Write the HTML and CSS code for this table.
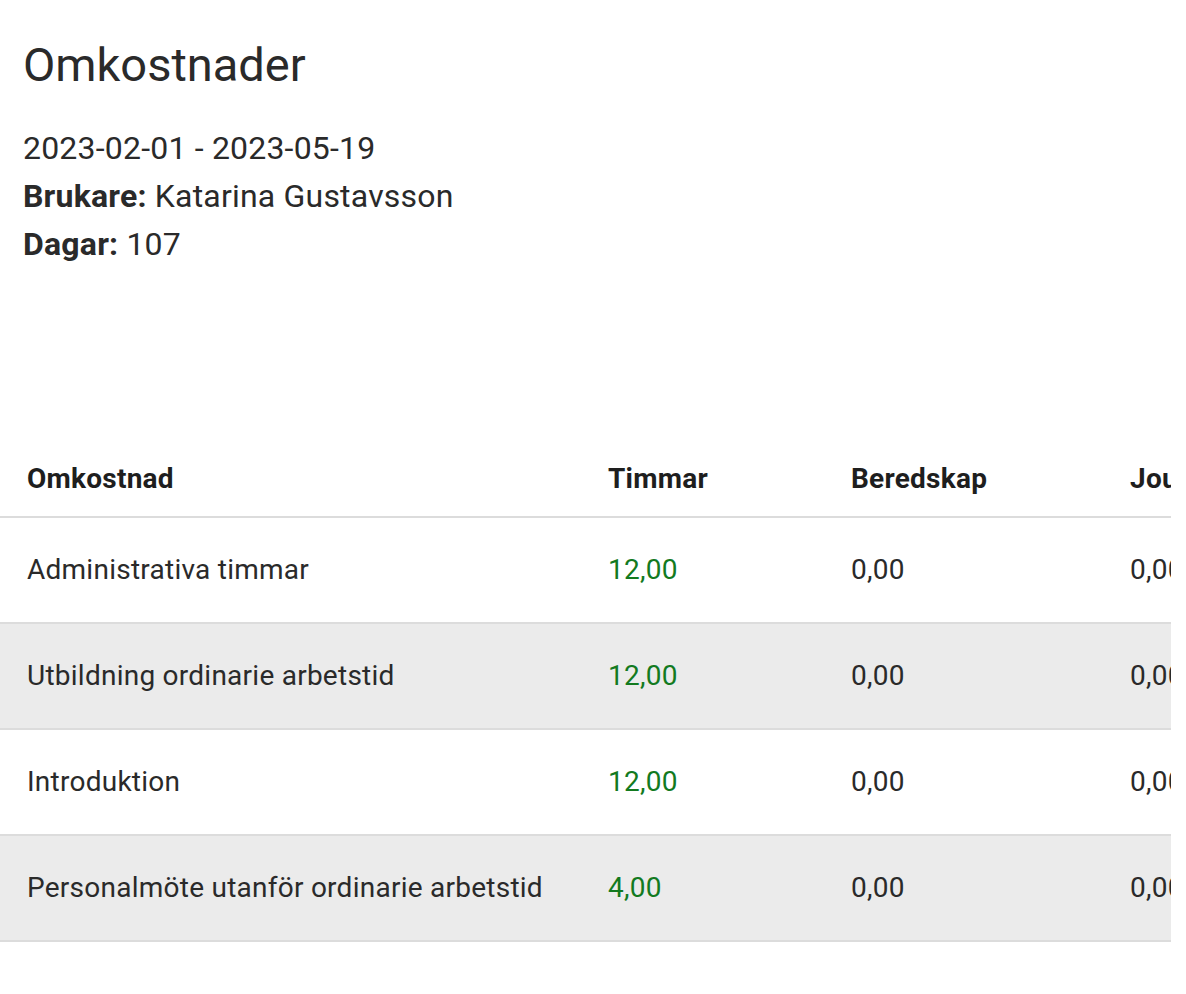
FILE: index.html
```html
<!DOCTYPE html>
<html lang="sv">
<head>
<meta charset="utf-8">
<title>Omkostnader</title>
<link rel="stylesheet" href="styles.css">
</head>
<body>
<div class="page">
  <header class="summary">
    <h1 class="title">Omkostnader</h1>
    <div class="meta">
      <div class="meta-line">2023-02-01 - 2023-05-19</div>
      <div class="meta-line"><strong>Brukare:</strong> Katarina Gustavsson</div>
      <div class="meta-line"><strong>Dagar:</strong> 107</div>
    </div>
  </header>
  <div class="table-wrap">
    <table class="cost-table">
      <colgroup>
        <col class="col-name">
        <col class="col-hours">
        <col class="col-standby">
        <col class="col-duty">
        <col class="col-extra">
      </colgroup>
      <thead>
        <tr>
          <th>Omkostnad</th>
          <th>Timmar</th>
          <th>Beredskap</th>
          <th>Jour</th>
          <th>Summa</th>
        </tr>
      </thead>
      <tbody>
        <tr>
          <td>Administrativa timmar</td>
          <td class="pos">12,00</td>
          <td>0,00</td>
          <td>0,00</td>
          <td>0,00</td>
        </tr>
        <tr class="alt">
          <td>Utbildning ordinarie arbetstid</td>
          <td class="pos">12,00</td>
          <td>0,00</td>
          <td>0,00</td>
          <td>0,00</td>
        </tr>
        <tr>
          <td>Introduktion</td>
          <td class="pos">12,00</td>
          <td>0,00</td>
          <td>0,00</td>
          <td>0,00</td>
        </tr>
        <tr class="alt">
          <td>Personalmöte utanför ordinarie arbetstid</td>
          <td class="pos">4,00</td>
          <td>0,00</td>
          <td>0,00</td>
          <td>0,00</td>
        </tr>
      </tbody>
    </table>
  </div>
</div>
</body>
</html>
```

FILE: styles.css
```css
html, body {
  margin: 0;
  padding: 0;
  background: #ffffff;
}

body {
  font-family: Roboto, "Liberation Sans", Arial, sans-serif;
  color: #2a2a2a;
}

.page {
  display: flex;
  flex-direction: column;
}

.summary {
  padding: 36px 24px 0 23px;
}

.title {
  margin: 0;
  font-size: 47px;
  font-weight: 400;
  line-height: 57.6px;
  color: #2a2a2a;
}

.meta {
  margin-top: 30px;
  display: flex;
  flex-direction: column;
}

.meta-line {
  font-size: 32px;
  line-height: 48px;
  letter-spacing: 0.2px;
}

.meta-line strong {
  font-weight: 700;
}

.table-wrap {
  margin-top: 174px;
  width: 1171px;
  overflow: hidden;
}

.cost-table {
  border-collapse: collapse;
  table-layout: fixed;
  width: 1500px;
  font-size: 28px;
  letter-spacing: 0.25px;
}

.col-name { width: 581px; }
.col-hours { width: 243px; }
.col-standby { width: 279px; }
.col-duty { width: 200px; }
.col-extra { width: 197px; }

.cost-table th {
  text-align: left;
  font-weight: 700;
  color: #1e1e1e;
  height: 74px;
  line-height: 32px;
  padding: 0 27px;
  vertical-align: middle;
  border-bottom: 2px solid #dcdcdc;
  white-space: nowrap;
}

.cost-table td {
  height: 104px;
  line-height: 32px;
  padding: 0 27px;
  vertical-align: middle;
  border-bottom: 2px solid #dcdcdc;
  white-space: nowrap;
  color: #2a2a2a;
}

.cost-table tr.alt td {
  background: #ebebeb;
}

.cost-table td.pos {
  color: #137a1f;
}
```
